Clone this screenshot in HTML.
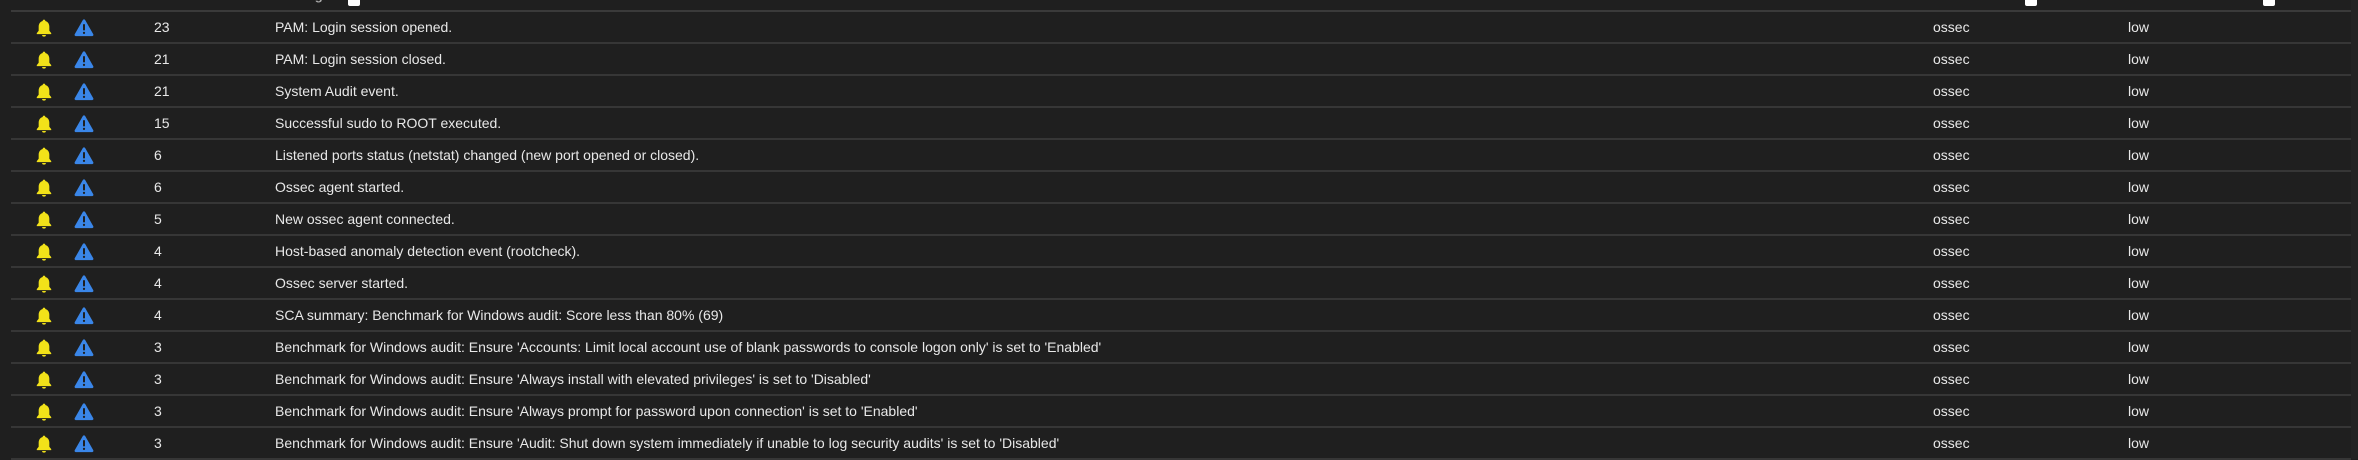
<!DOCTYPE html>
<html><head><meta charset="utf-8"><style>
html,body{margin:0;padding:0;background:#1f1f1f;width:2358px;height:459px;overflow:hidden;font-family:"Liberation Sans",Arial,sans-serif;color:#e8e8e8;font-size:14px}
.wrap{position:absolute;left:0;top:0;width:2358px;height:459px}
.hdr{position:absolute;left:11px;top:0;width:2340px;height:10px;border-bottom:2px solid #3a3a3a;overflow:hidden}
.hdr span{position:absolute;top:-12px;color:#aaa;font-weight:bold;font-size:13px}
.cb{position:absolute;top:-4px;width:12px;height:10px;background:#fff;border-radius:2px}
.row{position:absolute;left:11px;width:2340px;height:30px;border-bottom:2px solid #363636}
.row div{position:absolute;top:7px;white-space:nowrap}
.bell{position:absolute;left:24px;top:6px}
.warn{position:absolute;left:63px;top:6px}
.sb{position:absolute;left:2351px;top:0;width:7px;height:459px;background:#232323}
</style></head><body><div class="wrap">
<div class="hdr"><span style="left:143px">Count</span><span style="left:264px">Message</span><div class="cb" style="left:337px"></div><div class="cb" style="left:2014px"></div><div class="cb" style="left:2252px"></div></div>
<div id="rows"></div>
<div class="sb"></div>
</div>
<script>
var d=[["23","PAM: Login session opened."],["21","PAM: Login session closed."],["21","System Audit event."],["15","Successful sudo to ROOT executed."],["6","Listened ports status (netstat) changed (new port opened or closed)."],["6","Ossec agent started."],["5","New ossec agent connected."],["4","Host-based anomaly detection event (rootcheck)."],["4","Ossec server started."],["4","SCA summary: Benchmark for Windows audit: Score less than 80% (69)"],["3","Benchmark for Windows audit: Ensure 'Accounts: Limit local account use of blank passwords to console logon only' is set to 'Enabled'"],["3","Benchmark for Windows audit: Ensure 'Always install with elevated privileges' is set to 'Disabled'"],["3","Benchmark for Windows audit: Ensure 'Always prompt for password upon connection' is set to 'Enabled'"],["3","Benchmark for Windows audit: Ensure 'Audit: Shut down system immediately if unable to log security audits' is set to 'Disabled'"]];
var bell='<svg class="bell" width="18" height="20" viewBox="0 0 16 18"><path d="M8 1.5c-.8 0-1.2.6-1.2 1.2C4.5 3.3 3.2 5.3 3.2 7.8v3.7L1.5 13.6v.9h13v-.9l-1.7-2.1V7.8c0-2.5-1.3-4.5-3.6-5.1C9.2 2.1 8.8 1.5 8 1.5z" fill="#f2e219"/><path d="M6.3 15.3h3.4a1.7 1.5 0 0 1-3.4 0z" fill="#f2e219"/></svg>';
var warn='<svg class="warn" width="20" height="19" viewBox="0 0 18 17"><path d="M9 1.2c.5 0 .9.3 1.1.7l7.2 12.6c.5.8-.1 1.8-1.1 1.8H1.8c-1 0-1.6-1-1.1-1.8L7.9 1.9c.2-.4.6-.7 1.1-.7z" fill="#3a86e8"/><rect x="8.1" y="5.5" width="1.8" height="5.6" rx=".6" fill="#1f1f1f"/><circle cx="9" cy="13.3" r="1" fill="#1f1f1f"/></svg>';
var h='';
d.forEach(function(r,i){h+='<div class="row" style="top:'+(12+i*32)+'px">'+bell+warn+'<div style="left:143px">'+r[0]+'</div><div style="left:264px">'+r[1]+'</div><div style="left:1922px">ossec</div><div style="left:2117px">low</div></div>';});
document.getElementById('rows').innerHTML=h;
</script>
</body></html>
